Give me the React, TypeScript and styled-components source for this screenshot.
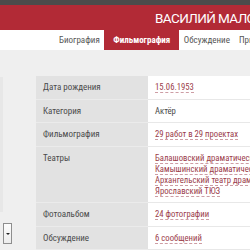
import { Fragment } from "react";
import styled, { createGlobalStyle } from "styled-components";

const GlobalStyle = createGlobalStyle`
  html, body {
    margin: 0;
    padding: 0;
    background: #efefef;
    overflow: hidden;
  }
  body {
    font-family: "Roboto Condensed", "DejaVu Sans Condensed", Roboto, sans-serif;
  }
`;

const Page = styled.div`
  width: 250px;
  height: 250px;
  overflow: hidden;
  display: flex;
  flex-direction: column;
`;

const TopBar = styled.div`
  height: 5px;
  background: #4b4b4b;
  flex-shrink: 0;
`;

const Header = styled.div`
  height: 25px;
  background: #b22a36;
  display: flex;
  align-items: center;
  padding-left: 155px;
  flex-shrink: 0;
`;

const Title = styled.h1`
  margin: 0;
  font-family: Roboto, sans-serif;
  font-weight: 400;
  font-size: 13.5px;
  letter-spacing: -0.6px;
  color: #fff;
  white-space: nowrap;
`;

const Nav = styled.nav`
  height: 20px;
  background: #fff;
  display: flex;
  padding-left: 54.5px;
  flex-shrink: 0;
`;

const Tab = styled.a<{ $active?: boolean }>`
  display: flex;
  align-items: center;
  padding: 0 ${(p) => (p.$active ? 9 : 4.5)}px;
  font-size: 9px;
  font-weight: ${(p) => (p.$active ? 700 : 400)};
  color: ${(p) => (p.$active ? "#fff" : "#555")};
  background: ${(p) => (p.$active ? "#b22a36" : "transparent")};
  white-space: nowrap;
`;

const Content = styled.div`
  display: flex;
  flex: 1;
`;

const Sidebar = styled.div`
  width: 36px;
  flex-shrink: 0;
  display: flex;
  flex-direction: column;
`;

const SideCard = styled.div`
  width: 3px;
  height: 135px;
  margin-top: 27px;
  background: #e7e7e7;
`;

const SelectButton = styled.div`
  margin: 11px 0 0 3px;
  width: 7px;
  height: 19px;
  border: 1px solid #8e8e8e;
  background: linear-gradient(#fdfdfd, #ececec);
  display: flex;
  align-items: center;
  justify-content: center;
`;

const Arrow = styled.span`
  width: 0;
  height: 0;
  border-left: 2px solid transparent;
  border-right: 2px solid transparent;
  border-top: 2px solid #222;
`;

const Table = styled.div`
  margin-top: 26px;
  flex: 1;
  display: grid;
  grid-template-columns: 112px 1fr;
  align-content: start;
`;

const Label = styled.div`
  background: #e2e2e2;
  padding: 6px 0 5.5px 7px;
  border-bottom: 1px solid #ebebeb;
  font-size: 9px;
  line-height: 11px;
  color: #4a4a4a;
  white-space: nowrap;
`;

const Value = styled.div`
  background: #fff;
  padding: 6px 0 5.5px 7px;
  border-bottom: 1px solid #e8e8e8;
  font-size: 8.7px;
  line-height: 11px;
  color: #4a4a4a;
  white-space: nowrap;
  display: flex;
  flex-direction: column;
  align-items: flex-start;
`;

const Link = styled.a`
  color: #9b3c4a;
  text-decoration: none;
  border-bottom: 1px dashed rgba(155, 60, 74, 0.5);
  line-height: 10px;
`;

const rows: { label: string; values: string[]; plain?: boolean }[] = [
  { label: "Дата рождения", values: ["15.06.1953"] },
  { label: "Категория", values: ["Актёр"], plain: true },
  { label: "Фильмография", values: ["29 работ в 29 проектах"] },
  {
    label: "Театры",
    values: [
      "Балашовский драматический театр",
      "Камышинский драматический театр",
      "Архангельский театр драмы",
      "Ярославский ТЮЗ",
    ],
  },
  { label: "Фотоальбом", values: ["24 фотографии"] },
  { label: "Обсуждение", values: ["6 сообщений"] },
];

export default function App() {
  return (
    <Page>
      <GlobalStyle />
      <TopBar />
      <Header>
        <Title>ВАСИЛИЙ МАЛОВ</Title>
      </Header>
      <Nav>
        <Tab>Биография</Tab>
        <Tab $active>Фильмография</Tab>
        <Tab>Обсуждение</Tab>
        <Tab>Призы</Tab>
      </Nav>
      <Content>
        <Sidebar>
          <SideCard />
          <SelectButton>
            <Arrow />
          </SelectButton>
        </Sidebar>
        <Table>
          {rows.map((r) => (
            <Fragment key={r.label}>
              <Label>{r.label}</Label>
              <Value>
                {r.values.map((v) =>
                  r.plain ? <span key={v}>{v}</span> : <Link key={v}>{v}</Link>
                )}
              </Value>
            </Fragment>
          ))}
        </Table>
      </Content>
    </Page>
  );
}
